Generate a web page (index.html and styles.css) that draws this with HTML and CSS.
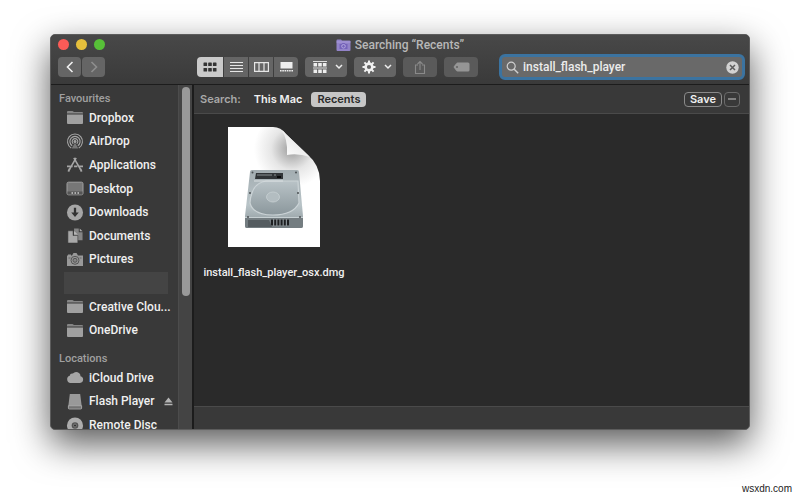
FILE: index.html
```
<!DOCTYPE html>
<html lang="en">
<head>
    <meta charset="UTF-8">
    <meta name="viewport" content="width=device-width, initial-scale=1.0">
    <title>Searching “Recents”</title>
    <link rel="stylesheet" href="styles.css">
</head>
<body>
    <svg class="defs" width="0" height="0">
        <symbol id="folder" viewBox="0 0 18 14">
            <path d="M1 3V1.5Q1 .5 2 .5h4.5l1.5 1h8q1 0 1 1V3z" fill="#858585"/>
            <path d="M1 4h16v8.5q0 1-1 1H2q-1 0-1-1z" fill="#a0a0a0"/>
        </symbol>
    </svg>

    <main class="window">
        <header class="titlebar">
            <div class="title-row">
                <div class="lights">
                    <button class="light red" aria-label="Close"></button>
                    <button class="light yellow" aria-label="Minimise"></button>
                    <button class="light green" aria-label="Zoom"></button>
                </div>
                <h1 class="title">
                    <svg width="15" height="12" viewBox="0 0 15 12">
                        <path d="M.5 2V1.500q0-1 1-1H5l1 1h7.500q1 0 1 1V11q0 1-1 1h-12q-1 0-1-1z" fill="#9283c8"/>
                        <path d="M.5 3h14" stroke="#a99bdc"/>
                        <path d="M3.500 5h2l1-1h2l1 1h2v5h-8z" fill="#7563ba"/>
                        <circle cx="7.500" cy="7.300" r="1.800" fill="none" stroke="#b4a8e0"/>
                    </svg>
                    Searching “Recents”
                </h1>
            </div>
            <div class="toolbar">
                <div class="group nav">
                    <button class="tool" aria-label="Back"><svg width="10" height="14" viewBox="0 0 10 14"><path d="M7.500 2 2.500 7l5 5" fill="none" stroke="#f0f0f0" stroke-width="1.600"/></svg></button>
                    <button class="tool" aria-label="Forward" disabled><svg width="10" height="14" viewBox="0 0 10 14"><path d="m2.500 2 5 5-5 5" fill="none" stroke="#8e8e8e" stroke-width="1.600"/></svg></button>
                </div>
                <div class="group views">
                    <button class="tool active" aria-label="Icons"><svg width="14" height="10" viewBox="0 0 14 10" fill="#333"><rect x="0.500" y="0.500" width="3.600" height="3.600" rx=".6"/><rect x="5.200" y="0.500" width="3.600" height="3.600" rx=".6"/><rect x="9.900" y="0.500" width="3.600" height="3.600" rx=".6"/><rect x="0.500" y="5.900" width="3.600" height="3.600" rx=".6"/><rect x="5.200" y="5.900" width="3.600" height="3.600" rx=".6"/><rect x="9.900" y="5.900" width="3.600" height="3.600" rx=".6"/></svg></button>
                    <button class="tool" aria-label="List"><svg width="13" height="10" viewBox="0 0 13 10"><path d="M0 .5h13M0 3.500h13M0 6.500h13M0 9.500h13" stroke="#e6e6e6"/></svg></button>
                    <button class="tool" aria-label="Columns"><svg width="15" height="10" viewBox="0 0 15 10"><path d="M.6.6h13.800v8.800H.6zM5 1v8M10 1v8" fill="none" stroke="#e6e6e6" stroke-width="1.200"/></svg></button>
                    <button class="tool" aria-label="Gallery"><svg width="13" height="10" viewBox="0 0 13 10"><rect x=".5" width="12" height="6.500" fill="#eee"/><path d="M0 8.800h13" stroke="#eee" stroke-width="1.600" stroke-dasharray="1.600 .68"/></svg></button>
                </div>
                <button class="tool menu" aria-label="Group by">
                    <svg width="14" height="13" viewBox="0 0 14 13"><path d="M0 .5h14M0 7h14" stroke="#ddd"/><g fill="#eee"><path d="M.5 2h3.600v3.500H.5zM5.200 2h3.600v3.500H5.200zM9.900 2h3.600v3.500H9.900zM.5 8.500h3.600V12H.5zM5.200 8.500h3.600V12H5.200zM9.900 8.500h3.600V12H9.900z"/></g></svg>
                    <svg width="8" height="6" viewBox="0 0 8 6"><path d="m1 1 3 3 3-3" fill="none" stroke="#eee" stroke-width="1.500"/></svg>
                </button>
                <button class="tool menu" aria-label="Action">
                    <svg width="14" height="14" viewBox="-7 -7 14 14"><circle r="3.400" fill="none" stroke="#f0f0f0" stroke-width="2.600"/><path d="M0-6.500V-4M0 4v2.500M-6.500 0H-4M4 0h2.500M-4.600-4.600l1.800 1.800M4.600 4.600 2.800 2.800M-4.600 4.600l1.800-1.800M4.600-4.600 2.800-2.800" stroke="#f0f0f0" stroke-width="2"/></svg>
                    <svg width="8" height="6" viewBox="0 0 8 6"><path d="m1 1 3 3 3-3" fill="none" stroke="#eee" stroke-width="1.500"/></svg>
                </button>
                <button class="tool single" aria-label="Share" disabled><svg width="12" height="15" viewBox="0 0 12 15"><path d="M4 5H1.500v8.500h9V5H8M6 10V1.500M3.500 4 6 1.500 8.500 4" fill="none" stroke="#8a8a8a" stroke-width="1.100"/></svg></button>
                <button class="tool single" aria-label="Tags" disabled><svg width="17" height="10" viewBox="0 0 17 10"><path d="M4.500.5H15q1.500 0 1.500 1.500v6q0 1.500-1.500 1.500H4.500Q3.500 9.500.5 5 3.500.5 4.500.5z" fill="#959595"/><circle cx="4" cy="5" r="1" fill="#606060"/></svg></button>
                <label class="search">
                    <svg width="13" height="13" viewBox="0 0 13 13"><circle cx="5.200" cy="5.200" r="4" fill="none" stroke="#cfcfcf" stroke-width="1.200"/><path d="m8.200 8.200 4 4" stroke="#cfcfcf" stroke-width="1.400"/></svg>
                    <input class="search-input" type="text" value="install_flash_player" aria-label="Search">
                    <button class="clear" aria-label="Clear search"><svg width="13" height="13" viewBox="0 0 13 13"><circle cx="6.500" cy="6.500" r="6.200" fill="#d2d2d2"/><path d="m4 4 5 5M9 4 4 9" stroke="#5c5c5c" stroke-width="1.500"/></svg></button>
                </label>
            </div>
        </header>

        <div class="body">
            <aside class="sidebar">
                <nav class="places">
                    <h2 class="heading">Favourites</h2>
                    <ul class="list favourites">
                        <li><a class="place" href="#"><svg class="icon" viewBox="0 0 18 14"><use href="#folder"/></svg>Dropbox</a></li>
                        <li><a class="place" href="#"><svg class="icon" viewBox="0 0 18 18" fill="none" stroke="#a6a6a6" stroke-width="1.200"><path d="M5 15.800a7.900 7.900 0 1 1 8 0M6 13.500a5.400 5.400 0 1 1 6 0M7.200 11.400a3 3 0 1 1 3.600 0"/><circle cx="9" cy="9" r="1" fill="#a6a6a6"/><path d="m9 10-3.500 6.500h7z" fill="#777" stroke="none"/></svg>AirDrop</a></li>
                        <li><a class="place" href="#"><svg class="icon" viewBox="0 0 18 18" fill="none" stroke="#a6a6a6" stroke-width="1.700"><path d="M7.800 2 15 14.500M10.200 2 3 14.500M.5 11h6M8 11h3.500M13.500 11h4"/><path d="m3.200 13.500-1.200 3M14.800 13.500l1.200 3" stroke-width="2"/></svg>Applications</a></li>
                        <li><a class="place" href="#"><svg class="icon" viewBox="0 0 18 14"><rect x="1" y=".7" width="16" height="12.600" rx="1.500" fill="#777" stroke="#a0a0a0"/><path d="M1.500 10h15v3h-15z" fill="#555"/><path d="M5.500 11.500h7.500" stroke="#ccc" stroke-width="1.300" stroke-dasharray="1.500 1.500"/></svg>Desktop</a></li>
                        <li><a class="place" href="#"><svg class="icon" viewBox="0 0 18 18"><circle cx="9" cy="9" r="8.500" fill="#a6a6a6"/><path d="M7.800 4h2.400v5H13l-4 4.700L5 9h2.800z" fill="#333"/></svg>Downloads</a></li>
                        <li><a class="place" href="#"><svg class="icon" viewBox="0 0 18 18"><path d="M8 1.500h5v4h4V14H8z" fill="#858585"/><path d="M14 1.500 17 4.500h-3z" fill="#aaa"/><path d="M1.500 4H7v5h5v8H1.500z" fill="#a8a8a8" stroke="#393939" stroke-width=".6"/><path d="M8 4.200 12 8H8z" fill="#b8b8b8"/></svg>Documents</a></li>
                        <li><a class="place" href="#"><svg class="icon" viewBox="0 0 18 14"><path d="M1 3h1V2h3v1h1l1.500-2.500h3L12 3h5v10.500H1z" fill="#999"/><circle cx="9" cy="7.800" r="4" fill="#999" stroke="#555"/><circle cx="9" cy="7.800" r="2" fill="#858585" stroke="#555"/><path d="M2.500 5.500h2M13.500 5.500h2" stroke="#666"/></svg>Pictures</a></li>
                        <li class="blank"></li>
                        <li><a class="place" href="#"><svg class="icon" viewBox="0 0 18 14"><use href="#folder"/></svg>Creative Clou...</a></li>
                        <li><a class="place" href="#"><svg class="icon" viewBox="0 0 18 14"><use href="#folder"/></svg>OneDrive</a></li>
                    </ul>
                    <h2 class="heading">Locations</h2>
                    <ul class="list locations">
                        <li><a class="place" href="#"><svg class="icon" viewBox="0 0 18 14"><path d="M4.500 12.500a3.700 3.700 0 0 1-.8-7.200 2.700 2.700 0 0 1 3.200-2.200 4.300 4.300 0 0 1 7.600 2.700 3.400 3.400 0 0 1-.5 6.700z" fill="#a6a6a6"/></svg>iCloud Drive</a></li>
                        <li><a class="place" href="#"><svg class="icon" viewBox="0 0 18 18"><path d="M3.500 1h11l1.500 12v3q0 1-1 1H3q-1 0-1-1v-3z" fill="#999"/><path d="M2 13.500h14V16q0 1-1 1H3q-1 0-1-1z" fill="#737373" stroke="#b0b0b0" stroke-width=".8"/></svg>Flash Player
                            <svg class="eject" width="9" height="9" viewBox="0 0 9 9" fill="#b5b5b5"><path d="M4.500.5 8.500 5.500h-8zM.5 6.800h8v1.500h-8z"/></svg></a></li>
                        <li><a class="place" href="#"><svg class="icon" viewBox="0 0 18 18"><circle cx="9" cy="9" r="8.500" fill="#adadad"/><circle cx="9" cy="9" r="3.500" fill="#555"/><circle cx="9" cy="9" r="1.600" fill="#333" stroke="#999" stroke-width=".7"/></svg>Remote Disc</a></li>
                    </ul>
                </nav>
                <div class="track"><div class="thumb"></div></div>
            </aside>

            <section class="content">
                <div class="scope">
                    <span class="scope-label">Search:</span>
                    <button class="scope-btn">This Mac</button>
                    <button class="scope-btn selected">Recents</button>
                    <button class="outline save">Save</button>
                    <button class="outline minus" aria-label="Remove"><svg width="8" height="2" viewBox="0 0 8 2"><path d="M0 1h8" stroke="#999" stroke-width="1.300"/></svg></button>
                </div>
                <div class="files">
                    <figure class="file">
                        <svg width="92" height="120" viewBox="0 0 92 120">
                            <defs>
                                <radialGradient id="shade" gradientUnits="userSpaceOnUse" cx="64" cy="22" r="38"><stop offset=".1" stop-color="#a8a8a8"/><stop offset=".55" stop-color="#e6e6e6"/><stop offset="1" stop-color="#fff"/></radialGradient>
                                <linearGradient id="curl" x1="0" y1="1" x2=".5" y2=".4"><stop offset="0" stop-color="#fff"/><stop offset="1" stop-color="#ececec"/></linearGradient>
                                <linearGradient id="metal" x1="0" y1="0" x2="0" y2="1"><stop offset="0" stop-color="#a3adb1"/><stop offset=".6" stop-color="#b9c4c8"/><stop offset="1" stop-color="#8a9599"/></linearGradient>
                                <linearGradient id="plate" x1="0" y1="0" x2="0" y2="1"><stop offset="0" stop-color="#b9c3c7"/><stop offset="1" stop-color="#8b979c"/></linearGradient>
                            </defs>
                            <path d="M0 0h45q8 0 13 7l21 20q13 11 13 27v66H0z" fill="url(#shade)"/>
                            <path d="M53 3q7 8 6 25 11-2 23 2L58 7q-2-3-5-4z" fill="url(#curl)"/>
                            <path d="M24 43h26q2 0 2 0h17q2 0 2 2l4 44v10q0 2-2 2H19q-2 0-2-2V89l5-44q0-2 2-2z" fill="url(#metal)"/>
                            <path d="M17 90h58v9q0 2-2 2H19q-2 0-2-2z" fill="#747d81"/>
                            <path d="M20 93h21l3 7H20z" fill="#555c60"/>
                            <path d="M17 90.500h58" stroke="#c6cfd2"/>
                            <path d="M43 92h18v7H43z" fill="#889094"/>
                            <path d="M43 95.500h18" stroke="#1e2022" stroke-width="6" stroke-dasharray="2 1.200"/>
                            <path d="M24 66q3-10 14-12h32l1 22q-6 12-26 12T22 76q0-5 2-10z" fill="url(#plate)" stroke="#cbd3d6" stroke-width="1.200"/>
                            <ellipse cx="45" cy="70" rx="6.500" ry="5" fill="#b3bdc1" stroke="#c8d0d3" stroke-width=".8"/>
                            <path d="M28 46h27v6H27z" fill="#303437"/>
                            <path d="M29 48h15M46 48h2" stroke="#888f92"/><path d="M49 50h4" stroke="#08090a" stroke-width="2"/>
                            <path d="M26 54h29" stroke="#dae0e2"/>
                            <g fill="#4b5053"><circle cx="24.500" cy="45.500" r="1"/><circle cx="68" cy="45.500" r="1"/><circle cx="22" cy="66" r="1"/><circle cx="70" cy="66" r="1"/><circle cx="20" cy="90" r="1"/><circle cx="72" cy="90" r="1"/></g>
                        </svg>
                        <figcaption class="file-name">install_flash_player_osx.dmg</figcaption>
                    </figure>
                </div>
                <div class="statusbar"></div>
            </section>
        </div>
    </main>
    <footer class="credit">wsxdn.com</footer>
</body>
</html>
```

FILE: styles.css
```
* {
    box-sizing: border-box;
}

body {
    margin: 0;
    padding-top: 34px;
    height: 100vh;
    display: flex;
    flex-direction: column;
    background-color: #fff;
    font-family: Roboto, "Liberation Sans", sans-serif;
    font-size: 12px;
    font-weight: 500;
    color: #f0f0f0;
    overflow: hidden;
}

button {
    margin: 0;
    padding: 0;
    border: none;
    background: none;
    font: inherit;
    color: inherit;
}

svg {
    display: block;
    flex-shrink: 0;
}

.defs {
    position: absolute;
}

.window {
    flex: 1;
    min-height: 0;
    margin: 0 50px;
    display: flex;
    flex-direction: column;
    border: 1px solid #5c5c5c;
    border-radius: 5px;
    background-color: #393939;
    box-shadow: 0 14px 36px rgba(0, 0, 0, 0.65);
    overflow: hidden;
}

/* title bar */

.titlebar {
    border-bottom: 1px solid #1c1c1c;
    background: linear-gradient(#484848, #3a3a3a);
}

.title-row {
    display: grid;
    grid-template-columns: 1fr auto 1fr;
    align-items: center;
    height: 19px;
    padding: 0 7px;
}

.lights {
    display: flex;
    gap: 7px;
}

.light {
    width: 11px;
    height: 11px;
    border-radius: 50%;
}

.red {
    background-color: #fc5b57;
}

.yellow {
    background-color: #e5bf3c;
}

.green {
    background-color: #57c038;
}

.title {
    display: flex;
    align-items: center;
    gap: 4px;
    margin: 0;
    font-size: 12px;
    font-weight: 500;
    color: #b8b8b8;
}

.toolbar {
    display: flex;
    align-items: center;
    gap: 7px;
    padding: 0 4px 4px 7px;
}

.group {
    display: flex;
    gap: 1px;
}

.nav {
    margin-right: 85px;
}

.tool {
    display: flex;
    align-items: center;
    justify-content: center;
    width: 24px;
    height: 20px;
    background-color: #656565;
}

.nav .tool {
    width: 23px;
    border-radius: 4px;
}

.views {
    border-radius: 4px;
    overflow: hidden;
}

.tool.active {
    width: 26px;
    background-color: #cacaca;
}

.tool.menu {
    gap: 8px;
    width: 42px;
    padding-left: 3px;
    border-radius: 4px;
}

.tool.single {
    width: 34px;
    border-radius: 4px;
    background-color: #5a5a5a;
}

.search {
    flex: 1;
    display: flex;
    align-items: center;
    gap: 4px;
    max-width: 246px;
    height: 26px;
    margin-left: auto;
    padding: 0 3px 0 4px;
    border: 3px solid #3b73a0;
    border-radius: 6px;
    background-color: #696969;
}

.search-input {
    flex: 1;
    min-width: 0;
    padding: 0;
    border: none;
    outline: none;
    background: none;
    font: inherit;
    color: #ececec;
}

/* sidebar */

.body {
    flex: 1;
    min-height: 0;
    display: flex;
}

.sidebar {
    display: flex;
    width: 143px;
    border-right: 2px solid #1c1c1c;
    overflow: hidden;
}

.places {
    flex: 1;
    min-width: 0;
    padding: 7px 4px 0 8px;
}

.heading {
    margin: 0;
    font-size: 11px;
    font-weight: 500;
    line-height: 14px;
    color: #a0a0a0;
}

.list {
    display: grid;
    grid-auto-rows: 1fr;
    margin: 0;
    padding: 0;
    list-style: none;
}

.favourites {
    height: 236px;
    margin-bottom: 10px;
}

.locations {
    height: 71px;
}

.place {
    display: flex;
    align-items: center;
    gap: 5px;
    height: 100%;
    padding-left: 7px;
    color: #f0f0f0;
    text-decoration: none;
    white-space: nowrap;
}

.icon {
    width: 18px;
    height: 17px;
}

.eject {
    margin-left: 4px;
}

.blank {
    margin: 1px 6px 1px 5px;
    background-color: #444;
}

.track {
    width: 14px;
    padding: 2px 2px 0 3px;
    border-left: 1px solid #4c4c4c;
    background-color: #444;
}

.thumb {
    width: 8px;
    height: 61%;
    border-radius: 4px;
    background-color: #999;
}

/* results */

.content {
    flex: 1;
    min-width: 0;
    display: flex;
    flex-direction: column;
}

.scope {
    display: flex;
    align-items: center;
    height: 29px;
    padding: 0 9px 0 6px;
    border-bottom: 1px solid #4a4a4a;
    font-family: Inter, "Liberation Sans", sans-serif;
    font-size: 11px;
    font-weight: 600;
}

.scope-label {
    margin-right: 7px;
    color: #a8a8a8;
}

.scope-btn {
    height: 15px;
    padding: 0 6px;
    border-radius: 4px;
}

.scope-btn.selected {
    margin-left: 3px;
    background-color: #c6c6c6;
    color: #2a2a2a;
}

.outline {
    display: flex;
    align-items: center;
    justify-content: center;
    height: 15px;
    border: 1px solid #8a8a8a;
    border-radius: 4px;
}

.save {
    width: 38px;
    margin-left: auto;
}

.minus {
    width: 16px;
    margin-left: 2px;
    border-color: #6a6a6a;
}

.files {
    flex: 1;
    padding: 13px 7px;
    background-color: #2a2a2a;
}

.file {
    display: flex;
    flex-direction: column;
    align-items: center;
    gap: 18px;
    width: 146px;
    margin: 0;
}

.file-name {
    font-size: 11px;
    line-height: 16px;
    white-space: nowrap;
}

.statusbar {
    height: 23px;
    border-top: 1px solid #4a4a4a;
}

.credit {
    display: flex;
    align-items: flex-end;
    justify-content: flex-end;
    height: 66px;
    padding: 0 8px 2px;
    font-family: "Liberation Sans", Arial, sans-serif;
    font-size: 10px;
    font-weight: 400;
    color: #222;
}
```
